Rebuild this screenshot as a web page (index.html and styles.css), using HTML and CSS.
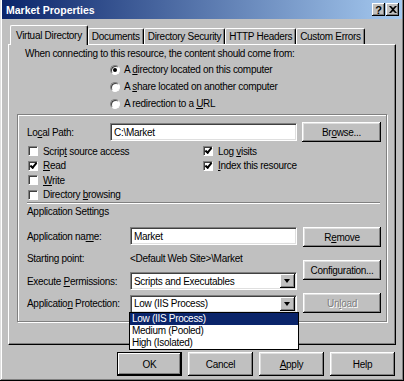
FILE: index.html
```html
<!DOCTYPE html>
<html lang="en">
<head>
  <meta charset="UTF-8">
  <title>Market Properties</title>
  <link rel="stylesheet" href="styles.css">
</head>
<body>
  <div class="window">
    <div class="titlebar">
      <span class="title">Market Properties</span>
      <span class="cap-btn help">?</span>
      <span class="cap-btn close">
        <svg width="8" height="7" viewBox="0 0 8 7"><path d="M0 0h2l2 2 2-2h2L5 3.5 8 7H6L4 5 2 7H0l3-3.5z" fill="#000"/></svg>
      </span>
    </div>

    <div class="tabs">
      <div class="tab active">Virtual Directory</div>
      <div class="tab">Documents</div>
      <div class="tab">Directory Security</div>
      <div class="tab">HTTP Headers</div>
      <div class="tab">Custom Errors</div>
    </div>

    <div class="panel">
      <p class="intro">When connecting to this resource, the content should come from:</p>
      <div class="radios">
        <div class="opt"><span class="radio checked"></span><span>A <u>d</u>irectory located on this computer</span></div>
        <div class="opt"><span class="radio"></span><span>A <u>s</u>hare located on another computer</span></div>
        <div class="opt"><span class="radio"></span><span>A redirection to a <u>U</u>RL</span></div>
      </div>

      <div class="group">
        <div class="path-row">
          <span class="label">Lo<u>c</u>al Path:</span>
          <div class="field path">C:\Market</div>
          <div class="btn browse"><span>Br<u>o</u>wse...</span></div>
        </div>

        <div class="checks">
          <div class="check"><span class="box"></span><span>Scrip<u>t</u> source access</span></div>
          <div class="check"><span class="box on"></span><span>Log <u>v</u>isits</span></div>
          <div class="check"><span class="box on"></span><span><u>R</u>ead</span></div>
          <div class="check"><span class="box on"></span><span><u>I</u>ndex this resource</span></div>
          <div class="check"><span class="box"></span><span><u>W</u>rite</span></div>
          <div></div>
          <div class="check"><span class="box"></span><span>Directory <u>b</u>rowsing</span></div>
        </div>

        <div class="separator"></div>
        <div class="section-title">Application Settings</div>

        <div class="app">
          <div class="app-fields">
            <div class="app-row">
              <span class="label wide">Application na<u>m</u>e:</span>
              <div class="field name">Market</div>
            </div>
            <div class="app-row">
              <span class="label wide">Starting point:</span>
              <span class="value">&lt;Default Web Site&gt;\Market</span>
            </div>
            <div class="app-row">
              <span class="label wide">Execute <u>P</u>ermissions:</span>
              <div class="field select"><span>Scripts and Executables</span><span class="arrow"></span></div>
            </div>
            <div class="app-row">
              <span class="label wide">Applicatio<u>n</u> Protection:</span>
              <div class="field select open"><span>Low (IIS Process)</span><span class="arrow"></span>
                <ul class="list">
                  <li class="selected">Low (IIS Process)</li>
                  <li>Medium (Pooled)</li>
                  <li>High (Isolated)</li>
                </ul>
              </div>
            </div>
          </div>
          <div class="app-buttons">
            <div class="btn"><span>R<u>e</u>move</span></div>
            <div class="btn"><span>Confi<u>g</u>uration...</span></div>
            <div class="btn disabled"><span>Un<u>l</u>oad</span></div>
          </div>
        </div>
      </div>
    </div>

    <div class="footer">
      <div class="btn big default">OK</div>
      <div class="btn big">Cancel</div>
      <div class="btn big"><span><u>A</u>pply</span></div>
      <div class="btn big">Help</div>
    </div>
  </div>
</body>
</html>
```

FILE: styles.css
```css
body {
  margin: 0;
  font-family: 'Liberation Sans', Arial, sans-serif;
  font-size: 10px;
  letter-spacing: -0.3px;
  color: #000;
  background: #c0c0c0;
}

.window {
  width: 404px;
  height: 381px;
  box-sizing: border-box;
  padding: 0 2px 2px 2px;
  background: #c0c0c0;
  box-shadow: inset -1px -1px #000, inset 1px 0 #dfdfdf, inset -2px -2px #808080, inset 2px 0 #fff;
}

.titlebar {
  height: 19px;
  display: flex;
  align-items: center;
  padding: 0 3px;
  background: linear-gradient(to right, #0a246a, #a6caf0);
}

.title {
  color: #fff;
  font-weight: bold;
  font-size: 10.5px;
  letter-spacing: 0;
  padding-left: 1px;
}

.cap-btn {
  width: 13px;
  height: 13px;
  display: flex;
  align-items: center;
  justify-content: center;
  font-weight: bold;
  font-size: 11px;
  background: #c0c0c0;
  box-shadow: inset -1px -1px #000, inset 1px 1px #fff, inset -2px -2px #808080;
}

.help {
  margin-left: auto;
  margin-right: 1px;
}

.tabs {
  display: flex;
  align-items: flex-end;
  height: 19px;
  margin: 6px 0 0 8px;
}

.tab {
  height: 16px;
  box-sizing: border-box;
  padding: 0 3px;
  display: flex;
  align-items: center;
  justify-content: center;
  background: #c0c0c0;
  border-top: 1px solid #fff;
  border-left: 1px solid #fff;
  border-right: 1px solid #000;
  border-radius: 2px 2px 0 0;
  box-shadow: inset -1px 0 #808080;
  white-space: nowrap;
}

.tab.active {
  height: 20px;
  margin-bottom: -1px;
  padding: 0 5px;
  position: relative;
  z-index: 1;
}

.panel {
  margin-left: 6px;
  width: 388px;
  height: 301px;
  box-sizing: border-box;
  border: 1px solid;
  border-color: #fff #000 #000 #fff;
  box-shadow: inset -1px -1px #808080;
  padding-top: 3px;
}

.intro {
  margin: 0 0 0 16px;
  line-height: 12px;
}

.radios {
  margin-top: 1px;
  padding-left: 101px;
}

.opt {
  height: 17px;
  display: flex;
  align-items: center;
}

.radio {
  width: 8px;
  height: 8px;
  margin-right: 4px;
  border-radius: 50%;
  background: #fff;
  border: 1px solid;
  border-color: #808080 #fff #fff #808080;
  box-shadow: inset 1px 1px #404040;
  display: flex;
  align-items: center;
  justify-content: center;
}

.radio.checked::after {
  content: "";
  width: 4px;
  height: 4px;
  border-radius: 50%;
  background: #000;
}

.group {
  margin: 2px 0 0 8px;
  width: 370px;
  height: 208px;
  box-sizing: border-box;
  border: 1px solid #808080;
  box-shadow: 1px 1px #fff, inset 1px 1px #fff;
  padding: 7px 5px 0 9px;
}

.label {
  width: 83px;
  flex: none;
}

.label.wide {
  width: 103px;
}

.path-row {
  display: flex;
  align-items: center;
  height: 20px;
}

.field {
  height: 18px;
  box-sizing: border-box;
  padding: 0 3px;
  display: flex;
  align-items: center;
  background: #fff;
  border: 1px solid;
  border-color: #808080 #fff #fff #808080;
  box-shadow: inset 1px 1px #404040, inset -1px -1px #dfdfdf;
}

.field.path {
  width: 187px;
}

.field.name {
  width: 167px;
}

.btn {
  height: 20px;
  box-sizing: border-box;
  display: flex;
  align-items: center;
  justify-content: center;
  background: #c0c0c0;
  box-shadow: inset -1px -1px #000, inset 1px 1px #fff, inset -2px -2px #808080, inset 2px 2px #dfdfdf;
}

.btn.browse {
  width: 79px;
  margin-left: 5px;
}

.btn.disabled {
  color: #808080;
  text-shadow: 1px 1px #fff;
}

.checks {
  margin-top: 2px;
  display: grid;
  grid-template-columns: 175px 1fr;
  grid-auto-rows: 14.5px;
  padding-left: 1px;
}

.check {
  display: flex;
  align-items: center;
}

.box {
  width: 10px;
  height: 10px;
  box-sizing: border-box;
  margin-right: 5px;
  background: #fff;
  border: 1px solid;
  border-color: #808080 #fff #fff #808080;
  box-shadow: inset 1px 1px #404040;
  display: flex;
  align-items: center;
  justify-content: center;
}

.box.on::after {
  content: "";
  width: 5px;
  height: 2px;
  margin-top: -2px;
  border-left: 2px solid #000;
  border-bottom: 2px solid #000;
  transform: rotate(-50deg);
}

.separator {
  height: 0;
  margin-right: 1px;
  border-top: 1px solid #808080;
  border-bottom: 1px solid #fff;
}

.section-title {
  margin-top: 2px;
  line-height: 12px;
}

.app {
  margin-top: 9px;
  display: flex;
}

.app-fields {
  width: 270px;
  display: grid;
  grid-auto-rows: 18px;
  row-gap: 4.5px;
}

.app-row {
  display: flex;
  align-items: center;
}

.field.select {
  width: 167px;
  position: relative;
}

.arrow {
  position: absolute;
  right: 1px;
  top: 1px;
  width: 15px;
  height: 14px;
  background: #c0c0c0;
  box-shadow: inset -1px -1px #000, inset 1px 1px #fff, inset -2px -2px #808080;
}

.arrow::after {
  content: "";
  position: absolute;
  left: 4px;
  top: 5px;
  border-left: 3.5px solid transparent;
  border-right: 3.5px solid transparent;
  border-top: 4px solid #000;
}

.list {
  position: absolute;
  left: -2px;
  top: 16px;
  width: 168px;
  margin: 0;
  padding: 0;
  list-style: none;
  background: #fff;
  border: 1px solid #000;
  z-index: 2;
}

.list li {
  height: 12px;
  line-height: 12px;
  padding-left: 2px;
}

.list li.selected {
  background: #0a246a;
  color: #fff;
}

.app-buttons {
  margin-left: 6px;
  width: 78px;
  display: flex;
  flex-direction: column;
  gap: 13px;
}

.footer {
  display: flex;
  justify-content: flex-end;
  gap: 6px;
  margin-top: 7px;
  padding-right: 7px;
}

.btn.big {
  width: 65px;
  height: 24px;
}

.btn.default {
  box-shadow: inset 0 0 0 1px #000, inset -2px -2px #000, inset 2px 2px #fff, inset -3px -3px #808080;
}
```
